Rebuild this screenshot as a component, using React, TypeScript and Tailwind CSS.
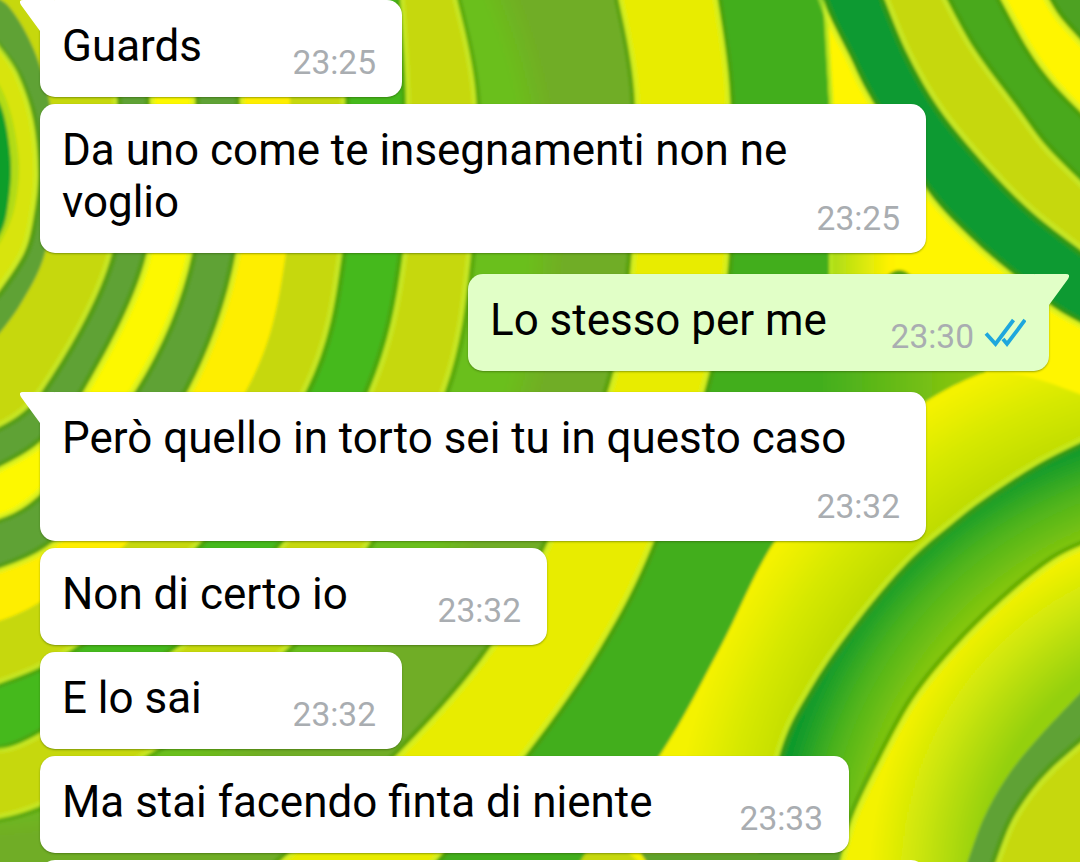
import React from "react";

type Point = [number, number];

function spline(points: Point[]): string {
  let d = `M${points[0][0]},${points[0][1]}`;
  for (let i = 0; i < points.length - 1; i++) {
    const p0 = points[Math.max(0, i - 1)];
    const p1 = points[i];
    const p2 = points[i + 1];
    const p3 = points[Math.min(points.length - 1, i + 2)];
    d += ` C${p1[0] + (p2[0] - p0[0]) / 6},${p1[1] + (p2[1] - p0[1]) / 6} ${p2[0] - (p3[0] - p1[0]) / 6},${p2[1] - (p3[1] - p1[1]) / 6} ${p2[0]},${p2[1]}`;
  }
  return d;
}

interface Band {
  points: Point[];
  fill: string;
  // "in": the filled side is the lighter one; "out": the outer side is.
  edge?: "in" | "out";
}

const LIME = "#c6d80c";
const MOSS = "#5fa235";

const leftBands: Band[] = [
  { points: [[717, -5], [730, 100], [728, 265], [706, 385], [653, 543], [600, 648], [527, 753], [428, 870]], fill: "#e8ec04", edge: "in" },
  { points: [[618, -5], [635, 100], [631, 265], [610, 385], [547, 544], [490, 648], [400, 752], [275, 866]], fill: "url(#olive)", edge: "out" },
  { points: [[456, -5], [476, 100], [471, 253], [445, 391], [369, 544], [288, 648], [152, 752], [40, 806], [-10, 820]], fill: LIME, edge: "in" },
  { points: [[400, -5], [406, 100], [403, 253], [369, 391], [282, 544], [177, 648], [35, 736], [-10, 750]], fill: "#45b91d", edge: "out" },
  { points: [[340, -5], [345, 100], [342, 253], [306, 391], [199, 544], [74, 648], [-10, 687]], fill: LIME, edge: "in" },
  { points: [[285, -5], [290, 100], [286, 253], [246, 391], [126, 544], [35, 605], [-10, 624]], fill: "#feee00" },
  { points: [[234, -5], [240, 100], [236, 253], [188, 391], [110, 490], [45, 548], [-10, 572]], fill: MOSS, edge: "out" },
  { points: [[188, -5], [195, 100], [192, 253], [135, 391], [38, 496], [-10, 522]], fill: "#fdf800", edge: "in" },
  { points: [[145, -5], [150, 100], [147, 253], [84, 391], [38, 444], [-10, 472]], fill: MOSS, edge: "out" },
  { points: [[110, -5], [117, 100], [112, 253], [42, 391], [-10, 432]], fill: LIME, edge: "in" },
  { points: [[-10, -5], [10, 8], [34, 50], [51, 110], [54, 180], [45, 253], [20, 305], [-10, 345]], fill: MOSS },
  { points: [[-10, 35], [0, 48], [18, 75], [33, 120], [38, 175], [33, 220], [24, 253], [0, 290], [-10, 300]], fill: "#d8e40a", edge: "in" },
  { points: [[-10, 78], [0, 86], [12, 118], [19, 165], [14, 210], [0, 243], [-10, 250]], fill: "#b2dc12" },
  { points: [[-10, 90], [0, 104], [7, 130], [11, 170], [7, 212], [0, 234], [-10, 245]], fill: "#0a9e2c" },
];

const topRightBands: Band[] = [
  { points: [[820, -10], [830, 17], [850, 57], [870, 97], [927, 190], [973, 240], [1010, 272], [1053, 307], [1090, 328]], fill: "#079a31", edge: "out" },
  { points: [[881, -10], [907, 53], [940, 110], [987, 167], [1033, 213], [1090, 257]], fill: LIME, edge: "in" },
  { points: [[942, -10], [973, 47], [1017, 107], [1047, 147], [1090, 190]], fill: "#48a91f", edge: "out" },
  { points: [[996, -10], [1027, 47], [1053, 83], [1090, 121]], fill: "#fff500", edge: "in" },
  { points: [[1044, -10], [1060, 17], [1090, 50]], fill: "#4da224", edge: "out" },
];

const bottomRightBands: Band[] = [
  { points: [[1090, 398], [1040, 380], [1000, 372], [975, 376], [925, 402], [850, 456], [775, 541], [720, 648], [660, 755], [574, 870]], fill: "url(#outerGlow)" },
  { points: [[1090, 438], [1040, 463], [987, 497], [953, 523], [907, 563], [853, 627], [810, 690], [780, 753], [755, 870]], fill: "url(#greenRing)", edge: "out" },
  { points: [[1090, 542], [1053, 560], [1003, 600], [953, 650], [913, 700], [880, 760], [853, 817], [838, 870]], fill: "url(#innerGlow)", edge: "in" },
  { points: [[1090, 683], [1040, 736], [1007, 777], [983, 820], [965, 870]], fill: MOSS },
  { points: [[1090, 735], [1053, 767], [1030, 793], [1010, 825], [993, 870]], fill: LIME, edge: "in" },
];

function Bands({ items, close, inward }: { items: Band[]; close: string; inward: Point }) {
  return (
    <>
      {items.map(({ points, fill, edge }, i) => {
        const d = spline(points);
        const sign = edge === "in" ? 1 : -1;
        const shift = (n: number) => `translate(${inward[0] * n},${inward[1] * n})`;
        return (
          <g key={i}>
            <path d={d + close} fill={fill} />
            {edge && (
              <g fill="none">
                <path d={d} transform={shift(-3 * sign)} stroke="#4c9900" strokeOpacity={0.55} strokeWidth={5} />
                <path d={d} transform={shift(2.5 * sign)} stroke="#c8f030" strokeOpacity={0.6} strokeWidth={5} />
              </g>
            )}
          </g>
        );
      })}
    </>
  );
}

function Wallpaper() {
  return (
    <svg className="absolute inset-0" width={1080} height={862} viewBox="0 0 1080 862" aria-hidden="true">
      <defs>
        <filter id="soft" filterUnits="userSpaceOnUse" x="-20" y="-20" width="1120" height="902">
          <feGaussianBlur stdDeviation="1.7" />
        </filter>
        <radialGradient id="olive" gradientUnits="userSpaceOnUse" cx="-50" cy="225" r="750">
          <stop offset="0.77" stopColor="#6bbf1b" />
          <stop offset="0.82" stopColor="#70ad25" />
        </radialGradient>
        <radialGradient id="outerGlow" gradientUnits="userSpaceOnUse" cx="1230" cy="880" r="565">
          <stop offset="0.81" stopColor="#bfdc05" />
          <stop offset="0.9" stopColor="#d6e805" />
          <stop offset="0.99" stopColor="#f4f200" />
        </radialGradient>
        <radialGradient id="greenRing" gradientUnits="userSpaceOnUse" cx="1230" cy="880" r="460">
          <stop offset="0.79" stopColor="#88c80c" />
          <stop offset="0.9" stopColor="#4fb41c" />
          <stop offset="0.99" stopColor="#119a2c" />
        </radialGradient>
        <radialGradient id="innerGlow" gradientUnits="userSpaceOnUse" cx="1230" cy="880" r="380">
          <stop offset="0.66" stopColor="#94d010" />
          <stop offset="0.82" stopColor="#cbe50a" />
          <stop offset="0.95" stopColor="#f4f200" />
        </radialGradient>
        <linearGradient id="meadow" gradientUnits="userSpaceOnUse" x1="820" y1="0" x2="980" y2="0">
          <stop offset="0" stopColor="#42ae1e" />
          <stop offset="1" stopColor="#8fc80c" />
        </linearGradient>
        <linearGradient id="sun" gradientUnits="userSpaceOnUse" x1="830" y1="0" x2="890" y2="0">
          <stop offset="0" stopColor="#a9dc18" />
          <stop offset="1" stopColor="#fff200" />
        </linearGradient>
      </defs>
      <g filter="url(#soft)">
        <rect x="-20" y="-20" width="1120" height="902" fill="#fff500" />
        <path d="M826,245H895V285H826Z" fill="url(#sun)" />
        <path d="M888,275Q901,264 912,277V290H888Z" fill="#4fa010" />
        <path d="M-20,-20H823L829,100L829,300H985V380L850,470L700,882H-20Z" fill="#42ae1e" />
        <path d="M820,300H985V378L925,410H820Z" fill="url(#meadow)" />
        <path d="M825,0L831,100V300" fill="none" stroke="#b8e61e" strokeWidth={4} />
        <Bands items={leftBands} close=" L-30,900 V-30 Z" inward={[-0.85, -0.45]} />
        <Bands items={topRightBands} close=" L1110,-30 Z" inward={[0.8, -0.6]} />
        <Bands items={bottomRightBands} close=" L1110,900 V300 Z" inward={[0.75, 0.65]} />
        <path d="M640,852H842L836,875H655Z" fill="#5ea22b" />
        <path d="M572,875L586,852H628L652,875Z" fill="#c6d80c" />
      </g>
    </svg>
  );
}

function Tail({ own }: { own?: boolean }) {
  return own ? (
    <svg className="absolute top-0 -right-[20px]" width={34} height={34} viewBox="0 0 34 34">
      <path d="M0,0H31Q36,0 33,5L14,31V34H0Z" fill="#e1ffc7" />
    </svg>
  ) : (
    <svg className="absolute top-0 -left-[20px]" width={34} height={34} viewBox="0 0 34 34">
      <path d="M34,0H3Q-2,0 1,5L20,31V34H34Z" fill="#ffffff" />
    </svg>
  );
}

function ReadTicks() {
  return (
    <svg className="mb-[8px] ml-[10px]" width={42} height={30} viewBox="0 0 42 30" fill="none" stroke="#1ea7dd" strokeWidth={3.8}>
      <path d="M2,15.5L11.5,26L29.5,2" />
      <path d="M19,21L23,26L41,2" />
    </svg>
  );
}

interface MessageProps {
  lines: string[];
  time: string;
  box: string;
  own?: boolean;
  tail?: boolean;
}

function Message({ lines, time, box, own, tail }: MessageProps) {
  return (
    <div
      className={`relative grid shrink-0 rounded-[15px] pt-[20px] pb-[15px] pl-[22px] shadow-[0_1px_2px_rgba(40,70,0,0.45)] ${own ? "self-end bg-[#e1ffc7] pr-[23px]" : "self-start bg-white pr-[26px]"} ${box}`}
    >
      {tail && <Tail own={own} />}
      <p className="relative col-start-1 row-start-1 text-[43.95px] leading-[52px] whitespace-nowrap text-black">
        {lines.map((line) => (
          <span key={line} className="block">
            {line}
          </span>
        ))}
      </p>
      <div className="relative col-start-1 row-start-1 flex items-end self-end justify-self-end">
        <time className="text-[33.5px] leading-[39px] text-[#a9adb1]">{time}</time>
        {own && <ReadTicks />}
      </div>
    </div>
  );
}

export default function App() {
  return (
    <main className="relative h-[862px] w-[1080px] overflow-hidden font-['Roboto',sans-serif]">
      <Wallpaper />
      <div className="relative flex h-full flex-col gap-[7px] pr-[31px] pl-[40px]">
        <Message lines={["Guards"]} time="23:25" box="w-[362px] h-[97px]" tail />
        <Message lines={["Da uno come te insegnamenti non ne", "voglio"]} time="23:25" box="w-[886px] h-[149px]" />
        <Message lines={["Lo stesso per me"]} time="23:30" box="mt-[14px] mb-[14px] w-[581px] h-[97px]" own tail />
        <Message lines={["Però quello in torto sei tu in questo caso"]} time="23:32" box="w-[886px] h-[149px]" tail />
        <Message lines={["Non di certo io"]} time="23:32" box="w-[507px] h-[97px]" />
        <Message lines={["E lo sai"]} time="23:32" box="w-[362px] h-[97px]" />
        <Message lines={["Ma stai facendo finta di niente"]} time="23:33" box="w-[809px] h-[97px]" />
        <div className="h-[97px] w-[886px] shrink-0 rounded-[15px] bg-white" />
      </div>
    </main>
  );
}
